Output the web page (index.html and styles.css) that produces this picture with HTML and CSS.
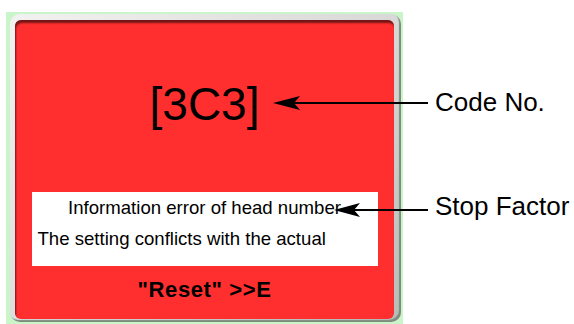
FILE: index.html
```html
<!DOCTYPE html>
<html lang="en">

<head>
    <meta charset="UTF-8">
    <meta name="viewport" content="width=device-width, initial-scale=1.0">
    <title>Error Code Screen</title>
    <link rel="stylesheet" href="styles.css">
</head>

<body>

    <div class="stage">
        <div class="screen-bg">
            <div class="screen-frame">
                <div class="error-panel">
                    <div class="code-no">[3C3]</div>
                    <div class="factor-box">
                        <p class="factor-title">Information error of head number</p>
                        <p class="factor-detail">The setting conflicts with the actual</p>
                    </div>
                    <div class="reset-hint">"Reset" &gt;&gt;E</div>
                </div>
            </div>
        </div>

        <div class="notes">
            <div class="note note-code">Code No.</div>
            <div class="note note-factor">Stop Factor</div>
        </div>

        <!-- callout arrows -->
        <svg class="arrows" width="574" height="324" viewBox="0 0 574 324">
            <line x1="292" y1="103" x2="428" y2="103" stroke="#000" stroke-width="2" />
            <polygon points="273,103 300,96 294,103 300,110" fill="#000" />
            <line x1="352" y1="210" x2="428" y2="210" stroke="#000" stroke-width="2" />
            <polygon points="334,210 360,203 354,210 360,217" fill="#000" />
        </svg>
    </div>

</body>

</html>
```

FILE: styles.css
```css
* {
    margin: 0;
    padding: 0;
    box-sizing: border-box;
}

body {
    font-family: "Liberation Sans", Arial, sans-serif;
    background-color: #ffffff;
    color: #000000;
    overflow: hidden;
}

.stage {
    position: relative;
    width: 574px;
    height: 324px;
    display: flex;
    align-items: flex-start;
}

.screen-bg {
    margin: 12px 0 0 6px;
    width: 397px;
    padding: 2px 2px 4px 4px;
    background-color: #c9f5c9;
}

.screen-frame {
    padding: 6px 7px 3px 5px;
    background: linear-gradient(135deg, #f2f2f2 0%, #d6d6d6 60%, #b8bcb8 100%);
    border-radius: 10px;
    box-shadow: inset -2px -2px 1px #7d8c7d;
}

.error-panel {
    height: 299px;
    background-color: #ff2f2f;
    border-radius: 6px;
    box-shadow: inset 1px 3px 2px rgba(0, 0, 0, 0.55);
    display: flex;
    flex-direction: column;
    align-items: center;
}

.code-no {
    margin-top: 61px;
    font-size: 46px;
    line-height: 46px;
    text-align: center;
}

.factor-box {
    margin-top: 65px;
    width: 346px;
    height: 74px;
    padding: 0 6px;
    background-color: #ffffff;
    font-size: 18.6px;
    line-height: 31px;
}

.factor-title {
    text-align: center;
}

.factor-detail {
    text-align: left;
}

.reset-hint {
    margin-top: 12px;
    font-size: 22px;
    line-height: 24px;
    font-weight: bold;
    letter-spacing: 0.6px;
}

.notes {
    padding: 87px 0 0 32px;
    display: flex;
    flex-direction: column;
}

.note {
    font-size: 26px;
    line-height: 30px;
    white-space: nowrap;
}

.note-factor {
    margin-top: 74px;
}

.arrows {
    position: absolute;
    left: 0;
    top: 0;
}
```
